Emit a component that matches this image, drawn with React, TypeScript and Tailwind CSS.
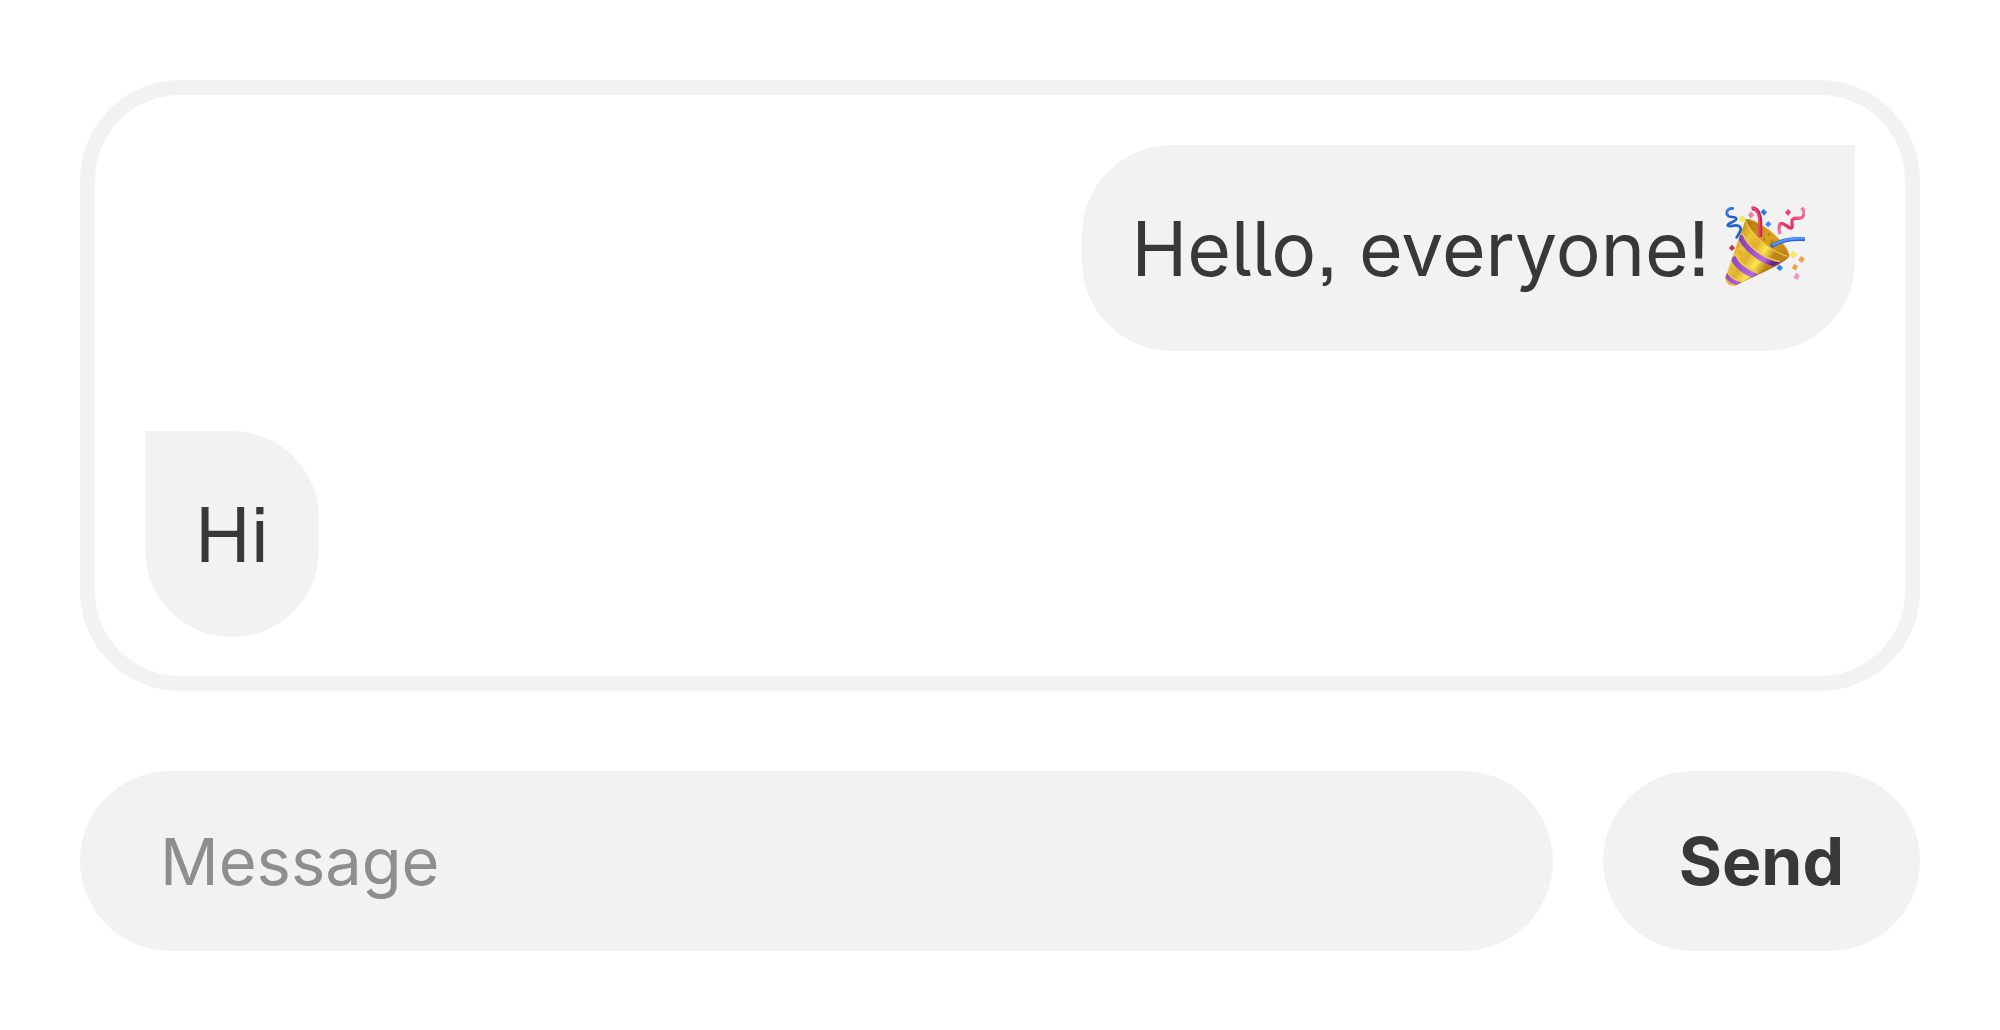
import type { ReactNode } from "react";

function PartyPopper() {
  return (
    <svg
      role="img"
      aria-label="party popper"
      viewBox="75 48 240 252"
      className="h-21 w-20 shrink-0"
      fill="none"
    >
      <defs>
        <linearGradient id="cone" x1="95" y1="165" x2="195" y2="235" gradientUnits="userSpaceOnUse">
          <stop offset="0" stopColor="#cf9c22" />
          <stop offset="0.25" stopColor="#efc53a" />
          <stop offset="0.5" stopColor="#dfb02c" />
          <stop offset="0.75" stopColor="#ffe650" />
          <stop offset="1" stopColor="#bd8218" />
        </linearGradient>
        <linearGradient id="mouth" x1="150" y1="95" x2="255" y2="200" gradientUnits="userSpaceOnUse">
          <stop offset="0" stopColor="#b07a14" />
          <stop offset="0.5" stopColor="#daa422" />
          <stop offset="1" stopColor="#bd8016" />
        </linearGradient>
        <linearGradient id="band" x1="100" y1="160" x2="200" y2="240" gradientUnits="userSpaceOnUse">
          <stop offset="0" stopColor="#7f3fb5" />
          <stop offset="0.5" stopColor="#a453d0" />
          <stop offset="0.8" stopColor="#b667e6" />
          <stop offset="1" stopColor="#65268f" />
        </linearGradient>
        <linearGradient id="pink" x1="232" y1="130" x2="315" y2="60" gradientUnits="userSpaceOnUse">
          <stop offset="0" stopColor="#f58cb4" />
          <stop offset="0.35" stopColor="#dd2f5d" />
          <stop offset="0.7" stopColor="#f2507c" />
          <stop offset="1" stopColor="#ee80a9" />
        </linearGradient>
        <clipPath id="coneShape">
          <path d="M137 88C145 118 197 180 268 199C262 209 240 222 210 237L107 286C93 292 75 279 76 263Z" />
        </clipPath>
      </defs>

      <path d="M98 55C82 54 77 67 83 76C88 84 106 78 109 86C111 94 83 99 83 106C85 115 111 98 120 111C127 120 118 130 110 142" stroke="#2264cc" strokeWidth="8" strokeLinecap="round" />
      <path d="M97 53C84 54 79 65 84 74" stroke="#4389f5" strokeWidth="4" strokeLinecap="round" />

      <path d="M137 88C150 81 199 108 225 135C250 158 269 182 268 200C240 207 133 125 137 88Z" fill="url(#mouth)" />
      <path d="M141 89C159 87 207 118 228 139C249 160 263 180 265 193" stroke="#edc547" strokeWidth="2" />
      <path d="M160 101L168 108L164 119L155 108ZM205 125L214 136L204 137ZM218 147L228 156L220 166L208 158ZM191 139L199 152L188 151Z" fill="#c28713" />

      <g clipPath="url(#coneShape)">
        <path d="M60 60H280V300H60Z" fill="url(#cone)" />
        <path d="M119 132C132 167 179 212 238 222" stroke="#edc94e" strokeWidth="20" />
        <path d="M119 136C132 170 179 216 238 225" stroke="url(#band)" strokeWidth="16" />
        <path d="M98 197C108 222 135 242 171 255" stroke="#edc94e" strokeWidth="22" />
        <path d="M98 201C108 225 135 247 171 260" stroke="url(#band)" strokeWidth="17" />
        <path d="M76 248C86 267 103 276 123 280" stroke="#edc94e" strokeWidth="16" />
        <path d="M76 252C86 271 103 279 123 283" stroke="url(#band)" strokeWidth="12" />
        <path d="M137 88C145 120 198 180 267 199" stroke="#f3cf50" strokeWidth="5" />
        <path d="M155 155L166 168L162 175L151 164ZM119 179L129 192L124 201L114 188Z" fill="#eaa01c" opacity="0.55" />
        <path d="M268 199C250 218 180 252 104 288" stroke="#a66a12" strokeWidth="4" opacity="0.7" />
      </g>

      <path d="M155 55C174 53 181 76 181 94V141" stroke="#c31f4d" strokeWidth="11" />
      <path d="M155 54C175 53 180 79 179 140" stroke="#f64270" strokeWidth="6" />
      <path d="M213 170C238 153 277 145 315 148" stroke="#2d68ce" strokeWidth="12" />
      <path d="M218 165C247 150 279 144 315 145" stroke="#5499ff" strokeWidth="6" />
      <path d="M239 133C236 114 236 100 245 100C254 100 264 115 273 114C283 112 270 94 279 87C287 81 302 90 309 79C315 70 311 60 305 53" stroke="url(#pink)" strokeWidth="10" />

      <g stroke="#6b6570" strokeOpacity="0.35" strokeWidth="1">
        <path d="M127 77L136 87L127 97L117 87Z" fill="#fff12f" />
        <path d="M154 65L163 76L152 85L144 74Z" fill="#f77ea9" />
        <path d="M191 57L201 67L192 77L182 66Z" fill="#2878ef" />
        <path d="M205 93L214 103L204 112L196 103Z" fill="#3c89ff" />
        <path d="M264 57L273 66L265 77L255 68Z" fill="#f0416b" />
        <path d="M96 164L105 174L96 183L87 174Z" fill="#d92755" />
        <path d="M280 184L290 194L280 204L270 194Z" fill="#ffed45" />
        <path d="M303 198L314 206L307 218L295 211Z" fill="#f9a13c" />
        <path d="M283 222L294 229L287 241L276 235Z" fill="#f6a130" />
        <path d="M239 224L249 233L240 243L229 234Z" fill="#3281ee" />
        <path d="M288 249L299 256L293 269L281 263Z" fill="#fc91c3" />
      </g>
    </svg>
  );
}

function Bubble({ mine = false, children }: { mine?: boolean; children: ReactNode }) {
  return (
    <li
      className={
        mine
          ? "flex min-h-[206px] items-center gap-4 self-end rounded-[90px] rounded-tr-none bg-[#f2f2f2] px-[50px]"
          : "flex min-h-[206px] items-center gap-4 self-start rounded-[90px] rounded-tl-none bg-[#f2f2f2] px-[50px]"
      }
    >
      {children}
    </li>
  );
}

export default function App() {
  return (
    <main className="flex min-h-screen flex-col gap-20 bg-white p-20 font-['Inter',sans-serif] text-[#383838]">
      <ul className="flex flex-col gap-20 rounded-[100px] border-[15px] border-[#f2f2f2] px-[50px] pt-[50px] pb-[39px] text-[75px] leading-none [font-feature-settings:'cv05','ss07']">
        <Bubble mine>
          <span>Hello, everyone!</span>
          <PartyPopper />
        </Bubble>
        <Bubble>Hi</Bubble>
      </ul>
      <form className="flex gap-[50px] text-[65px]" onSubmit={(e) => e.preventDefault()}>
        <input
          type="text"
          aria-label="Message"
          placeholder="Message"
          className="h-[180px] min-w-0 flex-1 rounded-full bg-[#f2f2f2] px-20 outline-none placeholder:text-[#8e8e8e]"
        />
        <button type="submit" className="h-[180px] rounded-full bg-[#f2f2f2] px-[76px] text-[66px] font-bold">
          Send
        </button>
      </form>
    </main>
  );
}
